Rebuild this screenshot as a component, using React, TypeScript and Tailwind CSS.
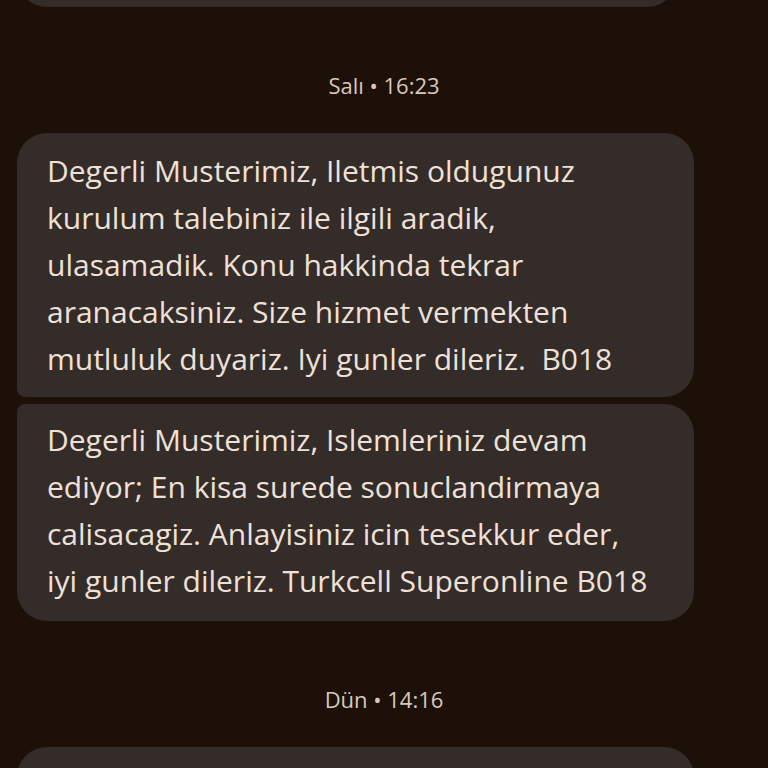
const font = { fontFamily: '"Open Sans", "Noto Sans", sans-serif' }

function Stamp({ label }: { label: string }) {
  return (
    <div className="pt-[64px] pb-[34px] text-center text-[22px] leading-[28px] text-[#d9c8bc]">
      {label}
    </div>
  )
}

function Bubble({ lines, className }: { lines: string[]; className: string }) {
  return (
    <div
      className={`ml-[17px] w-[677px] bg-[#342c29] pl-[30px] pr-[20px] text-[30px] leading-[47px] text-[#efe1d8] whitespace-pre ${className}`}
    >
      {lines.map((l, i) => (
        <div key={i}>{l}</div>
      ))}
    </div>
  )
}

export default function App() {
  return (
    <div className="h-[768px] w-[768px] overflow-hidden bg-[#1d1009]" style={font}>
      <div className="-mt-[53px] ml-[17px] h-[60px] w-[660px] rounded-[30px] bg-[#342c29]" />
      <Stamp label="Salı • 16:23" />
      <div className="flex flex-col gap-[7px]">
        <Bubble
          className="rounded-[30px] rounded-bl-[8px] pt-[14px] pb-[15px]"
          lines={[
            'Degerli Musterimiz, Iletmis oldugunuz',
            'kurulum talebiniz ile ilgili aradik,',
            'ulasamadik. Konu hakkinda tekrar',
            'aranacaksiniz. Size hizmet vermekten',
            'mutluluk duyariz. Iyi gunler dileriz.  B018',
          ]}
        />
        <Bubble
          className="rounded-[30px] rounded-tl-[8px] pt-[12px] pb-[17px]"
          lines={[
            'Degerli Musterimiz, Islemleriniz devam',
            'ediyor; En kisa surede sonuclandirmaya',
            'calisacagiz. Anlayisiniz icin tesekkur eder,',
            'iyi gunler dileriz. Turkcell Superonline B018',
          ]}
        />
      </div>
      <Stamp label="Dün • 14:16" />
      <div className="ml-[17px] h-[80px] w-[677px] rounded-[30px] bg-[#342c29]" />
    </div>
  )
}
